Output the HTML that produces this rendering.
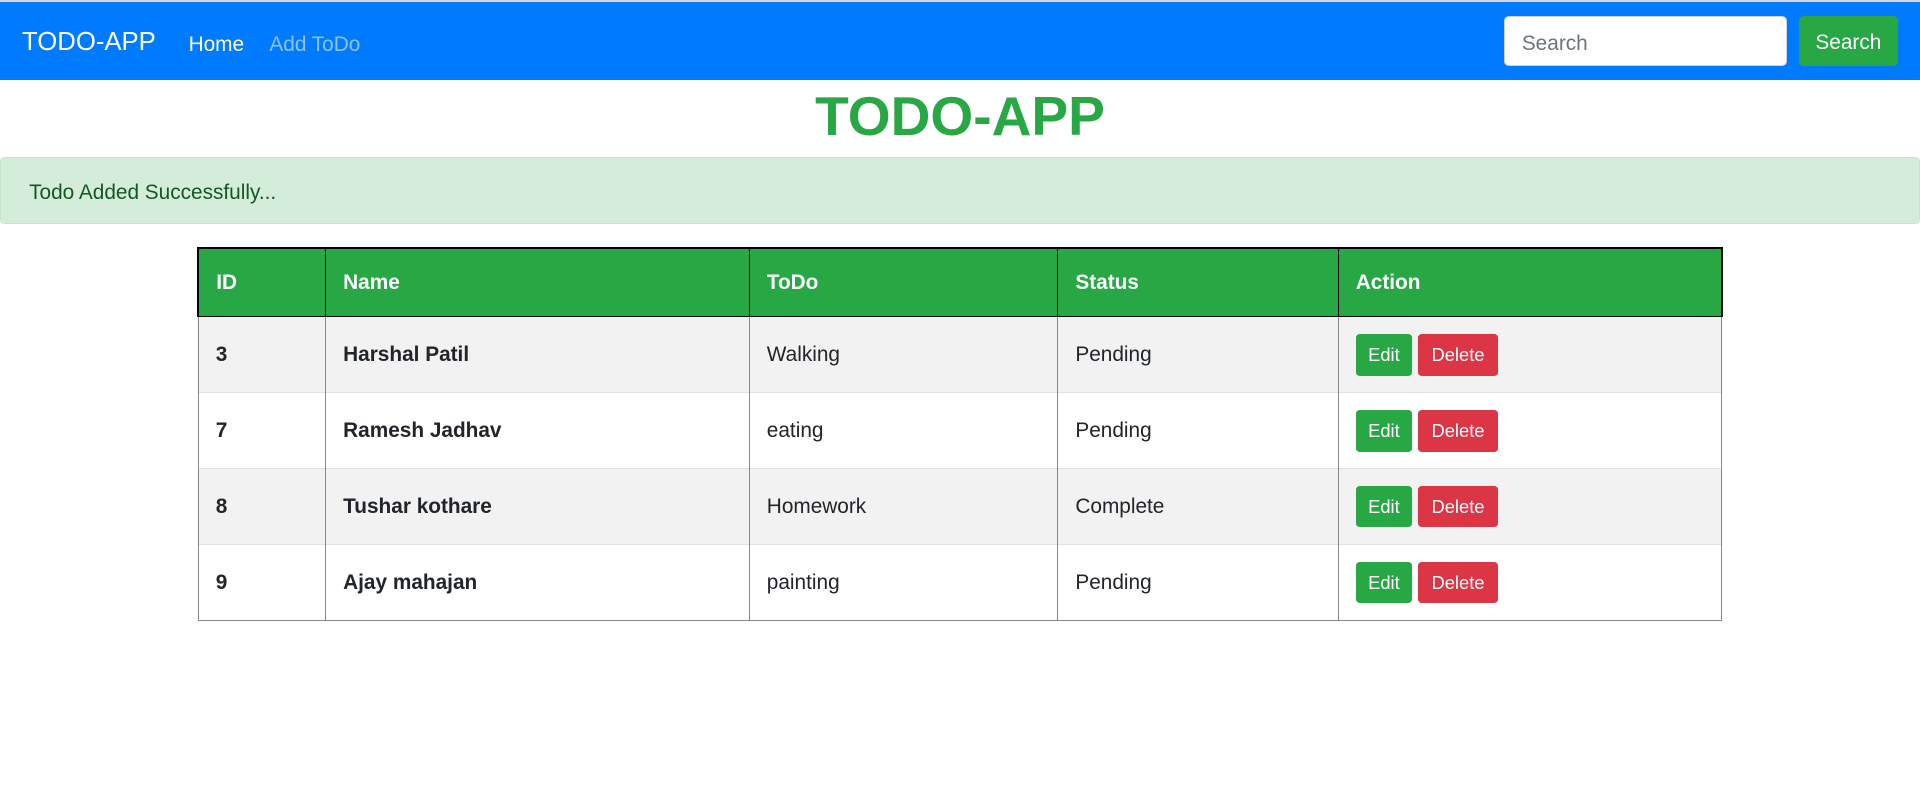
<!DOCTYPE html>
<html><head><meta charset="utf-8"><style>
html{zoom:1.2245}
body{margin:0;font-family:"Liberation Sans",sans-serif;color:#212529;background:#fff;width:1568px;height:659px;overflow:hidden}
.top{height:2px;background:#d6d6d6}
nav{position:absolute;top:2px;left:0;width:1568px;height:63px;background:#007bff}
.brand{position:absolute;left:18px;top:21px;font-size:21px;color:#fff}
.l1{position:absolute;left:154px;top:25px;font-size:17px;color:#fff}
.l2{position:absolute;left:220px;top:25px;font-size:17px;color:rgba(255,255,255,.55)}
.inp{position:absolute;left:1228px;top:11px;width:231px;height:41px;box-sizing:border-box;border:1px solid #ced4da;border-radius:4px;background:#fff;font-size:17px;color:#6c757d;padding:12px 14px 0}
.sb{position:absolute;left:1469px;top:11px;width:81px;height:41px;background:#28a745;border-radius:4px;color:#fff;font-size:17px;text-align:center;line-height:44px}
h1{position:absolute;top:66px;left:0;width:1568px;margin:0;text-align:center;color:#28a745;font-size:45px;font-weight:bold;line-height:58px}
.alert{position:absolute;top:128px;left:0;width:1568px;height:55px;box-sizing:border-box;background:#d4edda;border:1px solid #c3e6cb;border-radius:4px;color:#155724;font-size:17px;padding:19px 23px}
table{position:absolute;top:202px;left:161px;width:1246px;border-collapse:collapse;font-size:17px}
th{background:#28a745;color:#fff;text-align:left;height:56px;padding:0 14px;border:1px solid #000;border-top:2px solid #000;box-sizing:border-box}
th:first-child{border-left:2px solid #000}th:last-child{border-right:2px solid #000}
td{height:62px;padding:0 14px;border-left:1px solid #888;border-right:1px solid #888;border-top:1px solid #dee2e6;box-sizing:border-box}
tr:last-child td{border-bottom:1px solid #888}
tbody tr:nth-child(odd){background:#f2f2f2}
td.b{font-weight:bold}
.e,.d{display:inline-block;height:34px;line-height:34px;border-radius:3px;color:#fff;font-size:15px;text-align:center;vertical-align:middle}
.e{width:46px;background:#28a745}.d{width:65px;background:#dc3545;margin-left:5px}
</style></head><body>
<div class="top"></div>
<nav><span class="brand">TODO-APP</span><span class="l1">Home</span><span class="l2">Add ToDo</span>
<div class="inp">Search</div><div class="sb">Search</div></nav>
<h1>TODO-APP</h1>
<div class="alert">Todo Added Successfully...</div>
<table>
<colgroup><col style="width:104px"><col style="width:346px"><col style="width:252px"><col style="width:229px"><col></colgroup>
<thead><tr><th>ID</th><th>Name</th><th>ToDo</th><th>Status</th><th>Action</th></tr></thead>
<tbody>
<tr><td class="b">3</td><td class="b">Harshal Patil</td><td>Walking</td><td>Pending</td><td><span class="e">Edit</span><span class="d">Delete</span></td></tr>
<tr><td class="b">7</td><td class="b">Ramesh Jadhav</td><td>eating</td><td>Pending</td><td><span class="e">Edit</span><span class="d">Delete</span></td></tr>
<tr><td class="b">8</td><td class="b">Tushar kothare</td><td>Homework</td><td>Complete</td><td><span class="e">Edit</span><span class="d">Delete</span></td></tr>
<tr><td class="b">9</td><td class="b">Ajay mahajan</td><td>painting</td><td>Pending</td><td><span class="e">Edit</span><span class="d">Delete</span></td></tr>
</tbody></table>
</body></html>
